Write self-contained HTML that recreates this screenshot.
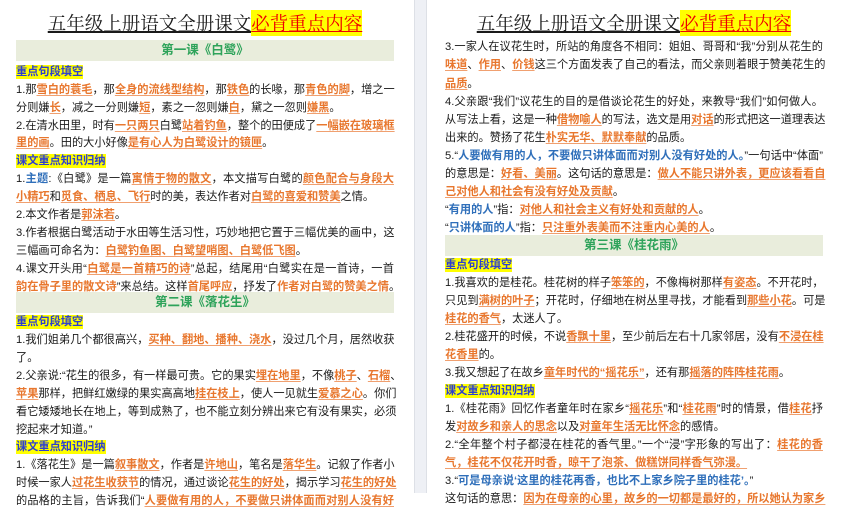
<!DOCTYPE html>
<html><head><meta charset="utf-8"><style>
body{margin:0;width:841px;height:493px;overflow:hidden;background:#fff;font-family:"Liberation Sans","Noto Sans CJK SC",sans-serif;font-size:11.2px;color:#1a1a1a}
.gap{position:absolute;left:414px;top:0;width:11px;height:493px;background:#eef0f5;border-left:1px solid #dde0e6;border-right:1px solid #dde0e6}
.pg{position:absolute;top:0;width:378px}
.t{position:absolute;top:10px;left:0;width:100%;text-align:center;font-family:"Noto Serif CJK SC",serif;font-size:18.5px;line-height:27px;white-space:nowrap}
.t span.u{text-decoration:underline;text-decoration-thickness:1.5px}
.t b{font-weight:normal;color:#e00;background:#ff0;text-decoration:underline}
.bar{position:absolute;left:0;width:378px;height:21px;background:#e9eddc;text-align:center;color:#2ea35a;font-weight:bold;font-size:12.5px;line-height:21px}
.l{position:absolute;left:0;width:378px;height:18px;line-height:18px;white-space:nowrap}
.j{text-align:justify;text-align-last:justify}
.o{color:#e8772e;font-weight:bold;text-decoration:underline;text-decoration-color:#f0a070;text-underline-offset:2px}
.h{color:#2c3fd0;background:#ff0;font-weight:bold;padding:1px 0}
.b{color:#2f6fba;font-weight:bold}
</style></head><body>
<div class="gap"></div>
<div class="pg" style="left:16px">
<div class="t"><span class="u">五年级上册语文全册课文</span><b>必背重点内容</b></div>
<div class="bar" style="top:40px">第一课《白鹭》</div>
<div class="l" style="top:63px"><span class="h">重点句段填空</span></div>
<div class="l j" style="top:81px">1.那<span class="o">雪白的蓑毛</span>，那<span class="o">全身的流线型结构</span>，那<span class="o">铁色</span>的长喙，那<span class="o">青色的脚</span>，增之一</div>
<div class="l" style="top:99px">分则嫌<span class="o">长</span>，减之一分则嫌<span class="o">短</span>，素之一忽则嫌<span class="o">白</span>，黛之一忽则<span class="o">嫌黑</span>。</div>
<div class="l j" style="top:117px">2.在清水田里，时有<span class="o">一只两只</span>白鹭<span class="o">站着钓鱼</span>，整个的田便成了<span class="o">一幅嵌在玻璃框</span></div>
<div class="l" style="top:134px"><span class="o">里的画</span>。田的大小好像<span class="o">是有心人为白鹭设计的镜匣</span>。</div>
<div class="l" style="top:152px"><span class="h">课文重点知识归纳</span></div>
<div class="l j" style="top:170px">1.<span class="b">主题</span>:《白鹭》是一篇<span class="o">寓情于物的散文</span>，本文描写白鹭的<span class="o">颜色配合与身段大</span></div>
<div class="l" style="top:188px"><span class="o">小精巧</span>和<span class="o">觅食、栖息、飞行</span>时的美，表达作者对<span class="o">白鹭的喜爱和赞美</span>之情。</div>
<div class="l" style="top:206px">2.本文作者是<span class="o">郭沫若</span>。</div>
<div class="l j" style="top:224px">3.作者根据白鹭活动于水田等生活习性，巧妙地把它置于三幅优美的画中，这</div>
<div class="l" style="top:242px">三幅画可命名为：<span class="o">白鹭钓鱼图、白鹭望哨图、白鹭低飞图</span>。</div>
<div class="l j" style="top:260px">4.课文开头用“<span class="o">白鹭是一首精巧的诗</span>”总起，结尾用“白鹭实在是一首诗，一首</div>
<div class="l j" style="top:278px"><span class="o">韵在骨子里的散文诗</span>”来总结。这样<span class="o">首尾呼应</span>，抒发了<span class="o">作者对白鹭的赞美之情</span>。</div>
<div class="bar" style="top:292px">第二课《落花生》</div>
<div class="l" style="top:313px"><span class="h">重点句段填空</span></div>
<div class="l j" style="top:331px">1.我们姐弟几个都很高兴，<span class="o">买种、翻地、播种、浇水</span>，没过几个月，居然收获</div>
<div class="l" style="top:349px">了。</div>
<div class="l j" style="top:367px">2.父亲说:“花生的很多，有一样最可贵。它的果实<span class="o">埋在地里</span>，不像<span class="o">桃子</span>、<span class="o">石榴</span>、</div>
<div class="l j" style="top:385px"><span class="o">苹果</span>那样，把鲜红嫩绿的果实高高地<span class="o">挂在枝上</span>，使人一见就生<span class="o">爱慕之心</span>。你们</div>
<div class="l j" style="top:403px">看它矮矮地长在地上，等到成熟了，也不能立刻分辨出来它有没有果实，必须</div>
<div class="l" style="top:421px">挖起来才知道。”</div>
<div class="l" style="top:438px"><span class="h">课文重点知识归纳</span></div>
<div class="l j" style="top:456px">1.《落花生》是一篇<span class="o">叙事散文</span>，作者是<span class="o">许地山</span>，笔名是<span class="o">落华生</span>。记叙了作者小</div>
<div class="l j" style="top:474px">时候一家人<span class="o">过花生收获节</span>的情况，通过谈论<span class="o">花生的好处</span>，揭示学习<span class="o">花生的好处</span></div>
<div class="l j" style="top:492px">的品格的主旨，告诉我们“<span class="o">人要做有用的人，不要做只讲体面而对别人没有好</span></div>
</div>
<div class="pg" style="left:445px">
<div class="t"><span class="u">五年级上册语文全册课文</span><b>必背重点内容</b></div>
<div class="l j" style="top:38px">3.一家人在议花生时，所站的角度各不相同：姐姐、哥哥和“我”分别从花生的</div>
<div class="l j" style="top:56px"><span class="o">味道</span>、<span class="o">作用</span>、<span class="o">价钱</span>这三个方面发表了自己的看法，而父亲则着眼于赞美花生的</div>
<div class="l" style="top:75px"><span class="o">品质</span>。</div>
<div class="l j" style="top:93px">4.父亲跟“我们”议花生的目的是借谈论花生的好处，来教导“我们”如何做人。</div>
<div class="l j" style="top:111px">从写法上看，这是一种<span class="o">借物喻人</span>的写法，选文是用<span class="o">对话</span>的形式把这一道理表达</div>
<div class="l" style="top:129px">出来的。赞扬了花生<span class="o">朴实无华、默默奉献</span>的品质。</div>
<div class="l j" style="top:147px">5.“<span class="b">人要做有用的人，不要做只讲体面而对别人没有好处的人。</span>”一句话中“体面”</div>
<div class="l j" style="top:165px">的意思是：<span class="o">好看、美丽</span>。这句话的意思是：<span class="o">做人不能只讲外表，更应该看看自</span></div>
<div class="l" style="top:183px"><span class="o">己对他人和社会有没有好处及贡献</span>。</div>
<div class="l" style="top:201px">“<span class="b">有用的人</span>”指：<span class="o">对他人和社会主义有好处和贡献的人</span>。</div>
<div class="l" style="top:219px">“<span class="b">只讲体面的人</span>”指：<span class="o">只注重外表美而不注重内心美的人</span>。</div>
<div class="bar" style="top:235px">第三课《桂花雨》</div>
<div class="l" style="top:256px"><span class="h">重点句段填空</span></div>
<div class="l j" style="top:274px">1.我喜欢的是桂花。桂花树的样子<span class="o">笨笨的</span>，不像梅树那样<span class="o">有姿态</span>。不开花时，</div>
<div class="l j" style="top:292px">只见到<span class="o">满树的叶子</span>；开花时，仔细地在树丛里寻找，才能看到<span class="o">那些小花</span>。可是</div>
<div class="l" style="top:310px"><span class="o">桂花的香气</span>，太迷人了。</div>
<div class="l j" style="top:328px">2.桂花盛开的时候，不说<span class="o">香飘十里</span>，至少前后左右十几家邻居，没有<span class="o">不浸在桂</span></div>
<div class="l" style="top:346px"><span class="o">花香里</span>的。</div>
<div class="l" style="top:364px">3.我又想起了在故乡<span class="o">童年时代的“摇花乐”</span>，还有那<span class="o">摇落的阵阵桂花雨</span>。</div>
<div class="l" style="top:382px"><span class="h">课文重点知识归纳</span></div>
<div class="l j" style="top:400px">1.《桂花雨》回忆作者童年时在家乡“<span class="o">摇花乐</span>”和“<span class="o">桂花雨</span>”时的情景，借<span class="o">桂花</span>抒</div>
<div class="l" style="top:418px">发<span class="o">对故乡和亲人的思念</span>以及<span class="o">对童年生活无比怀念</span>的感情。</div>
<div class="l j" style="top:436px">2.“全年整个村子都浸在桂花的香气里。”一个“浸”字形象的写出了：<span class="o">桂花的香</span></div>
<div class="l" style="top:454px"><span class="o">气，桂花不仅花开时香，晾干了泡茶、做糕饼同样香气弥漫。</span></div>
<div class="l" style="top:472px">3.“<span class="b">可是母亲说‘这里的桂花再香，也比不上家乡院子里的桂花’。</span>”</div>
<div class="l j" style="top:490px">这句话的意思：<span class="o">因为在母亲的心里，故乡的一切都是最好的，所以她认为家乡</span></div>
</div>
</body></html>
